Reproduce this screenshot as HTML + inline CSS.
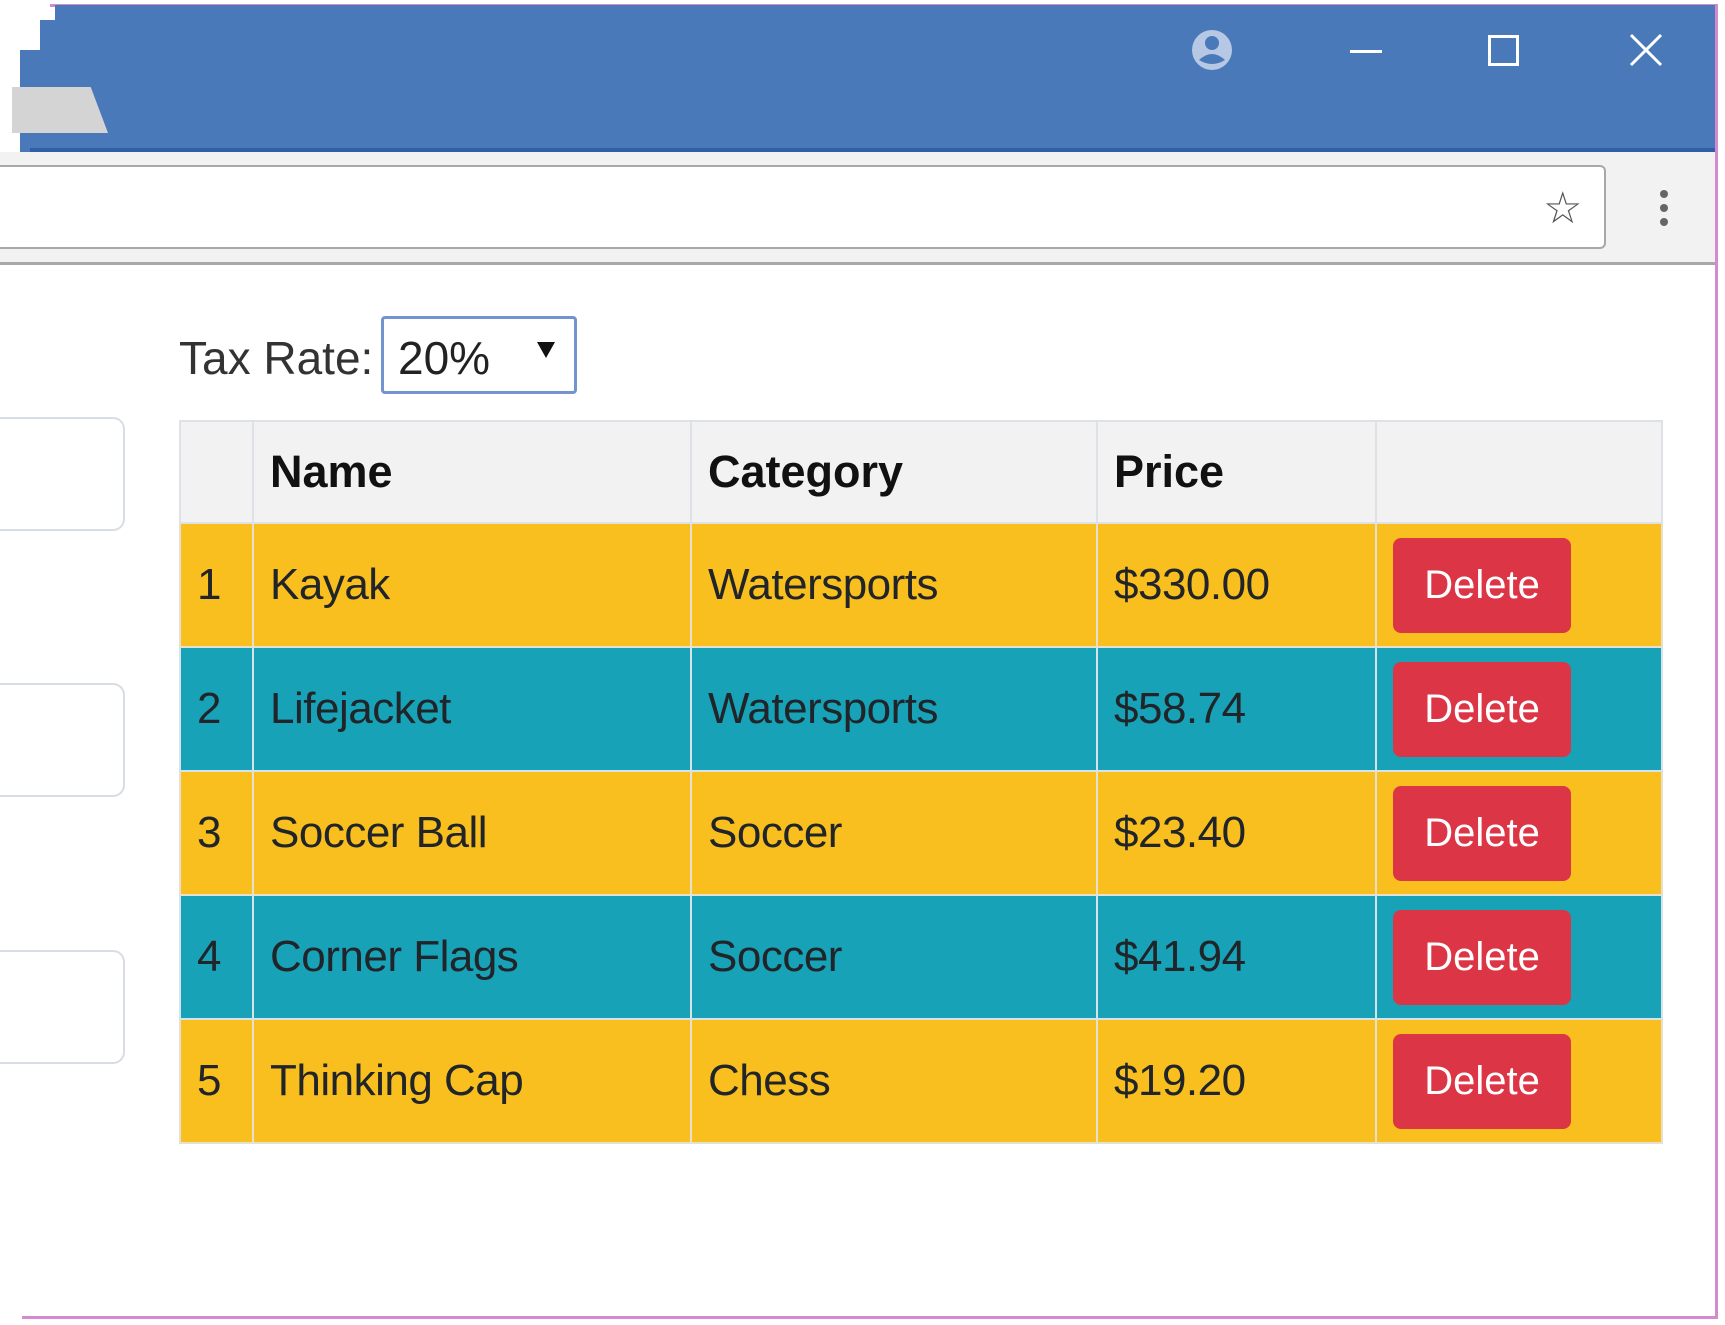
<!DOCTYPE html>
<html><head><meta charset="utf-8"><style>
*{box-sizing:border-box;margin:0;padding:0}
body{width:1725px;height:1325px;background:#fff;position:relative;overflow:hidden;font-family:"Liberation Sans",sans-serif;color:#212529}
.a{position:absolute}
table{border-collapse:collapse;position:absolute;left:179px;top:420px;width:1482px;table-layout:fixed}
td,th{border:2px solid #dee2e6;font-size:44px;text-align:left;padding:0 0 0 16px;vertical-align:middle}
th{background:#f2f2f2;height:102px;font-weight:bold;font-size:45px;color:#111}
td{height:124px;letter-spacing:-0.5px}
tr.y td{background:#f8bf1e;border-color:#e6e0d0}
tr.t td{background:#17a2b8;border-color:#d6e3e8}
.btn{display:inline-block;background:#dc3545;color:#fff;border-radius:8px;width:178px;height:95px;line-height:95px;text-align:center;font-size:40px;letter-spacing:0}
.box{position:absolute;left:0;width:125px;height:114px;border:2px solid #d8dce4;border-left:none;border-radius:0 12px 12px 0;background:#fff}
</style></head><body>
<div class="a" style="left:50px;top:4px;width:1668px;height:3px;background:#d48ad0"></div>
<div class="a" style="left:55px;top:5px;width:1663px;height:148px;background:#4a79b9"></div>
<div class="a" style="left:20px;top:50px;width:40px;height:103px;background:#4a79b9"></div>
<div class="a" style="left:40px;top:20px;width:30px;height:40px;background:#4a79b9"></div>
<div class="a" style="left:12px;top:87px;width:96px;height:46px;background:#d4d4d4;clip-path:polygon(0 0,82% 0,100% 100%,0 100%)"></div>
<div class="a" style="left:30px;top:148px;width:1688px;height:4px;background:#2f5fa6"></div>
<svg class="a" style="left:1190px;top:28px" width="45" height="45" viewBox="0 0 45 45"><circle cx="22" cy="22" r="20" fill="#b7c8e4"/><circle cx="22" cy="15" r="7" fill="#4a79b9"/><path d="M9 32 Q22 20 35 32 Q22 40 9 32Z" fill="#4a79b9"/></svg>
<div class="a" style="left:1350px;top:50px;width:32px;height:3px;background:#fff"></div>
<div class="a" style="left:1488px;top:35px;width:31px;height:31px;border:3px solid #fff"></div>
<svg class="a" style="left:1629px;top:33px" width="34" height="34"><path d="M2 2L32 32M32 2L2 32" stroke="#fff" stroke-width="3"/></svg>
<div class="a" style="left:0;top:152px;width:1718px;height:112px;background:#f2f2f2"></div>
<div class="a" style="left:0;top:165px;width:1606px;height:84px;background:#fff;border:2px solid #a8a8a8;border-left:none;border-radius:0 6px 6px 0"></div>
<div class="a" style="left:0;top:262px;width:1718px;height:3px;background:#a8a8a8"></div>
<div class="a" style="left:1543px;top:183px;font-size:44px;color:#555">☆</div>
<div class="a" style="left:1660px;top:190px;width:8px;height:8px;border-radius:50%;background:#666;box-shadow:0 14px 0 #666,0 28px 0 #666"></div>
<div class="a" style="left:1715px;top:4px;width:3px;height:1315px;background:#d48ad0"></div>
<div class="a" style="left:22px;top:1316px;width:1696px;height:3px;background:#d48ad0"></div>
<div class="box" style="top:417px"></div>
<div class="box" style="top:683px"></div>
<div class="box" style="top:950px"></div>
<div class="a" style="left:179px;top:331px;font-size:46px;color:#333">Tax Rate:</div>
<div class="a" style="left:381px;top:316px;width:196px;height:78px;border:3px solid #7394d0;border-radius:4px;background:#fff"></div>
<div class="a" style="left:398px;top:331px;font-size:46px;color:#222">20%</div>
<div class="a" style="left:537px;top:342px;width:0;height:0;border-left:9px solid transparent;border-right:9px solid transparent;border-top:16px solid #111"></div>
<table>
<colgroup><col style="width:73px"><col style="width:438px"><col style="width:406px"><col style="width:279px"><col style="width:286px"></colgroup>
<tr><th></th><th>Name</th><th>Category</th><th>Price</th><th></th></tr>
<tr class="y"><td>1</td><td>Kayak</td><td>Watersports</td><td>$330.00</td><td><span class="btn">Delete</span></td></tr>
<tr class="t"><td>2</td><td>Lifejacket</td><td>Watersports</td><td>$58.74</td><td><span class="btn">Delete</span></td></tr>
<tr class="y"><td>3</td><td>Soccer Ball</td><td>Soccer</td><td>$23.40</td><td><span class="btn">Delete</span></td></tr>
<tr class="t"><td>4</td><td>Corner Flags</td><td>Soccer</td><td>$41.94</td><td><span class="btn">Delete</span></td></tr>
<tr class="y"><td>5</td><td>Thinking Cap</td><td>Chess</td><td>$19.20</td><td><span class="btn">Delete</span></td></tr>
</table>
</body></html>
